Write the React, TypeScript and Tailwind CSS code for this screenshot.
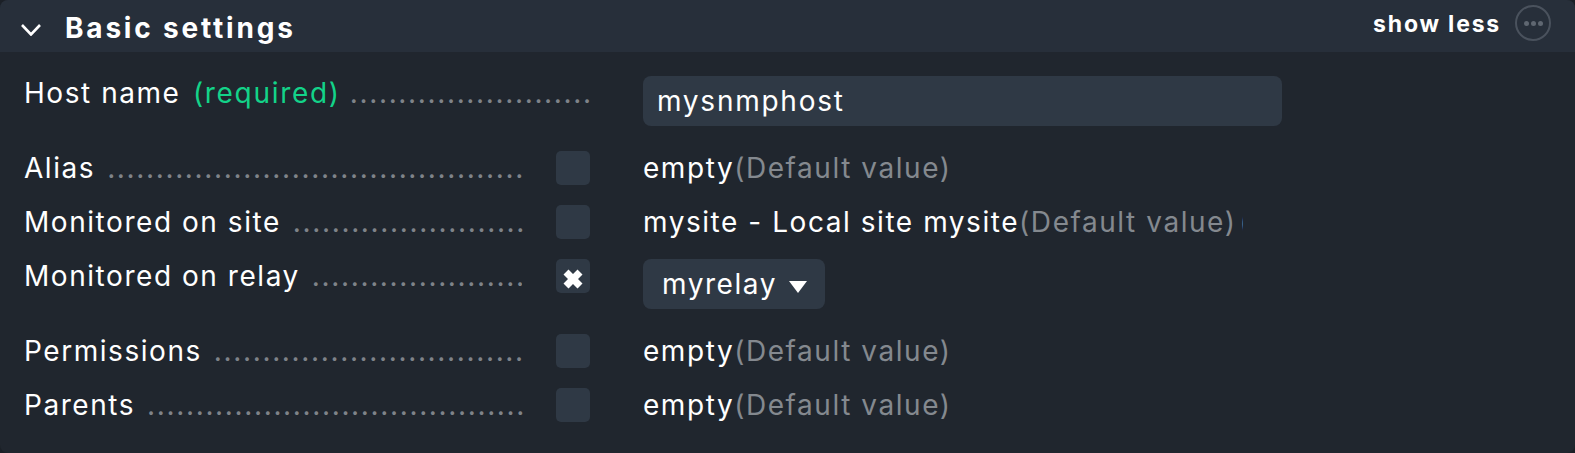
const dots = '.'.repeat(90)

function Leader({ label, width, gap = 'ml-[12px]' }: { label: React.ReactNode; width: string; gap?: string }) {
  return (
    <div className={`flex h-[34px] shrink-0 items-baseline ${width}`}>
      <span className="shrink-0 whitespace-nowrap">{label}</span>
      <span className={`${gap} min-w-0 flex-1 overflow-hidden whitespace-nowrap tracking-[1.65px] text-[#7f8389]`}>{dots}</span>
    </div>
  )
}

function Check({ checked, gap = 'ml-[31px]' }: { checked?: boolean; gap?: string }) {
  return (
    <div className={`${gap} flex h-[34px] w-[34px] shrink-0 items-center justify-center rounded-[5px] bg-[#2f3945]`}>
      {checked && (
        <svg viewBox="0 0 20 20" className="mt-[6px] h-[20px] w-[20px]">
          <path d="M5.5 .5 10 5 14.5 .5 19.5 5.5 15 10 19.5 14.5 14.5 19.5 10 15 5.5 19.5 .5 14.5 5 10 .5 5.5Z" fill="#fff" />
        </svg>
      )}
    </div>
  )
}

function Row({ label, value, className, more }: { label: string; value: string; className: string; more?: boolean }) {
  return (
    <div className={`flex items-center ${className}`}>
      <Leader label={label} width="w-[501px]" />
      <Check />
      <div className="ml-[53px] flex w-[600px] overflow-hidden whitespace-nowrap">
        <span>{value}</span>
        <span className="shrink-0 text-[#84898f]">(Default value)</span>
        {more && <span className="ml-[3px] shrink-0 text-[#84898f]">(</span>}
      </div>
    </div>
  )
}

export default function App() {
  return (
    <div className="bg-[#1b2027]">
      <div className="h-[453px] w-[1575px] overflow-hidden rounded-[8px] bg-[#20262e] font-['Inter',sans-serif] text-[28px] leading-[34px] tracking-[1.55px] text-white">
        <div className="flex h-[52px] items-center bg-[#272f3a] pl-[21px] pr-[24px]">
          <svg viewBox="0 0 20 12" className="mt-[7px] h-[12px] w-[20px]" fill="none" stroke="#fff" strokeWidth="2.6">
            <path d="M1 1 10 10.5 19 1" />
          </svg>
          <span className="ml-[24px] mt-[4px] font-bold tracking-[2.8px]">Basic settings</span>
          <span className="mb-[4px] ml-auto text-[23px] font-bold tracking-[1.8px]">show less</span>
          <div className="mb-[6px] ml-[14px] flex h-[36px] w-[36px] items-center justify-center rounded-full border-2 border-[#4a525d]">
            <div className="flex gap-[2px]">
              <span className="h-[5px] w-[5px] rounded-full bg-[#5f6771]" />
              <span className="h-[5px] w-[5px] rounded-full bg-[#5f6771]" />
              <span className="h-[5px] w-[5px] rounded-full bg-[#5f6771]" />
            </div>
          </div>
        </div>
        <div className="pl-[24px]">
          <div className="mt-[24px] flex items-start">
            <Leader
              width="w-[570px]"
              gap="ml-[9px]"
              label={<>Host name <span className="ml-[3px] tracking-[1.7px] text-[#13d389]">(required)</span></>}
            />
            <div className="ml-[49px] flex h-[50px] w-[639px] items-center rounded-[8px] bg-[#2f3945] px-[14px] tracking-[1.75px]">mysnmphost</div>
          </div>
          <Row className="mt-[25px]" label="Alias" value="empty" />
          <Row className="mt-[20px]" label="Monitored on site" value="mysite - Local site mysite" more />
          <div className="mt-[20px] flex items-start">
            <Leader label="Monitored on relay" width="w-[498px]" />
            <Check checked gap="ml-[34px]" />
            <div className="ml-[53px] flex h-[50px] items-center rounded-[8px] bg-[#2f3945] pl-[19px] pr-[18px]">
              myrelay
              <svg viewBox="0 0 18 12" className="ml-[12px] mt-[6px] h-[12px] w-[18px]"><path d="M0 0H18L9 12Z" fill="#fff" /></svg>
            </div>
          </div>
          <Row className="mt-[25px]" label="Permissions" value="empty" />
          <Row className="mt-[20px]" label="Parents" value="empty" />
        </div>
      </div>
    </div>
  )
}
